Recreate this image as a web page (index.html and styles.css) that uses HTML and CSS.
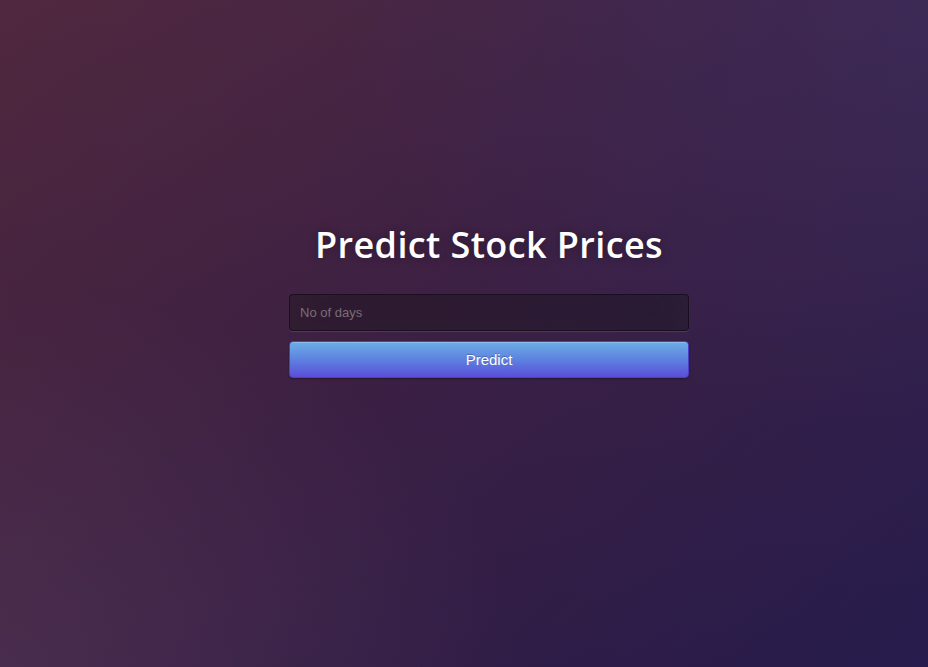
FILE: index.html
```html
<!DOCTYPE html>
<html lang="en">
<head>
<meta charset="utf-8">
<title>Predict Stock Prices</title>
<link rel="stylesheet" href="styles.css">
</head>
<body>
<main class="page">
  <form class="predict">
    <h1 class="title">Predict Stock Prices</h1>
    <input class="field" type="text" placeholder="No of days">
    <button class="btn" type="button">Predict</button>
  </form>
</main>
</body>
</html>
```
FILE: styles.css
```css
html, body {
  margin: 0;
  height: 100%;
}
body {
  font-family: "Open Sans", sans-serif;
  background:
    radial-gradient(ellipse at 0% 100%, rgba(110, 80, 110, 0.3) 0%, rgba(110, 80, 110, 0) 40%),
    radial-gradient(ellipse at 100% 0%, rgba(60, 50, 100, 0.45) 0%, rgba(60, 50, 100, 0) 45%),
    linear-gradient(180deg, rgba(70, 50, 90, 0.2) 0%, rgba(20, 20, 60, 0.15) 100%),
    linear-gradient(135deg, #532638 0%, #3f1f41 45%, #291d4f 100%);
  background-attachment: fixed;
}
.page {
  min-height: 100%;
  display: flex;
  justify-content: center;
  padding-left: 50px;
  box-sizing: border-box;
}
.predict {
  width: 400px;
  display: flex;
  flex-direction: column;
  padding-top: 218px;
}
.title {
  margin: 0 0 22px;
  text-align: center;
  color: #fff;
  font-size: 36px;
  font-weight: 600;
  letter-spacing: 0.4px;
  line-height: 54px;
  text-shadow: 0 0 10px rgba(0, 0, 0, 0.3);
}
.field {
  box-sizing: border-box;
  height: 37px;
  width: 100%;
  margin: 0 0 10px;
  padding: 0 10px;
  font-family: "Liberation Sans", Arial, sans-serif;
  font-size: 13px;
  color: #fff;
  background: rgba(0, 0, 0, 0.3);
  border: 1px solid rgba(0, 0, 0, 0.35);
  border-radius: 4px;
  outline: none;
  box-shadow: inset 0 -5px 45px rgba(100, 100, 100, 0.12), 0 1px 1px rgba(255, 255, 255, 0.12);
}
.field::placeholder {
  color: #7a6d79;
}
.btn {
  box-sizing: border-box;
  height: 37px;
  width: 100%;
  font-family: "Liberation Sans", Arial, sans-serif;
  font-size: 15px;
  color: #fff;
  text-shadow: 0 -1px 0 rgba(0, 0, 0, 0.25);
  background: linear-gradient(180deg, #6caee6 0%, #5d7ddf 55%, #5a4ed8 100%);
  border: 1px solid #4c3ec7;
  border-radius: 4px;
  box-shadow: inset 0 1px 0 rgba(255, 255, 255, 0.2), 0 1px 2px rgba(0, 0, 0, 0.3);
  cursor: pointer;
}
```
